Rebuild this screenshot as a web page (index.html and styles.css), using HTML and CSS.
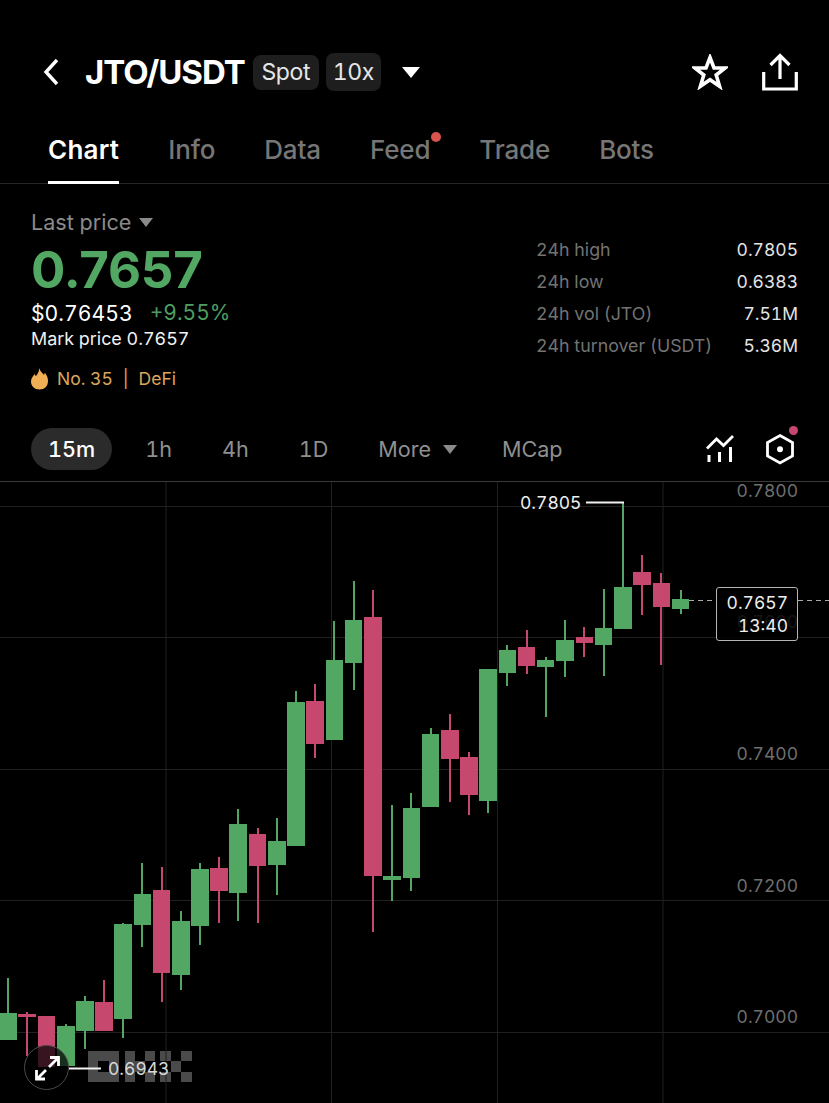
FILE: index.html
```html
<!DOCTYPE html>
<html lang="en">
<head>
<meta charset="utf-8">
<title>JTO/USDT</title>
<link rel="stylesheet" href="styles.css">
</head>
<body>
<main class="app">
  <header class="topbar">
    <svg class="back" width="16" height="28" viewBox="0 0 16 28"><path d="M14 2 3 14l11 12" fill="none" stroke="#fff" stroke-width="3.4"/></svg>
    <h1 class="pair">JTO/USDT</h1>
    <span class="chip chip-spot">Spot</span>
    <span class="chip chip-lev">10x</span>
    <span class="caret caret-white"></span>
    <span class="spacer"></span>
    <svg class="star" width="36" height="36" viewBox="0 0 36 36"><path d="M18 3.500 22 14h11.200l-9 7 3.400 11.300L18 25.700 8.400 32.300 11.800 21l-9-7H14z" fill="none" stroke="#fff" stroke-width="3.600" stroke-linejoin="miter"/></svg>
    <svg class="share" width="36" height="38" viewBox="0 0 36 38"><path d="M18 26V3M8.500 12 18 2.500 27.500 12M1.700 19v17h32.600V19" fill="none" stroke="#fff" stroke-width="3.200"/></svg>
  </header>

  <nav class="tabs">
    <a class="tab tab-active">Chart</a>
    <a class="tab">Info</a>
    <a class="tab">Data</a>
    <a class="tab tab-dot">Feed</a>
    <a class="tab">Trade</a>
    <a class="tab">Bots</a>
  </nav>

  <section class="summary">
    <div class="price-col">
      <div class="last-label">Last price <span class="caret caret-gray"></span></div>
      <div class="last-price">0.7657</div>
      <div class="fiat-row"><span class="fiat">$0.76453</span><span class="change">+9.55%</span></div>
      <div class="mark">Mark price 0.7657</div>
      <div class="rank">
        <svg width="17" height="22" viewBox="0 0 17 22"><path d="M8 0c1 3 3 4.500 5 7 .5-1 .6-1.500.7-2.500C15.800 7 17 9.500 17 13c0 5-3.500 8.500-8.500 8.500S0 18 0 13.500C0 10 2 8.500 3.500 6c.5 1 .8 1.500 1.500 2C6.500 6 8.500 3.500 8 0z" fill="#f0ae55"/></svg>
        <span>No. 35</span><span class="rank-sep">|</span><span>DeFi</span>
      </div>
    </div>
    <dl class="stats">
      <div class="stat"><dt>24h high</dt><dd>0.7805</dd></div>
      <div class="stat"><dt>24h low</dt><dd>0.6383</dd></div>
      <div class="stat"><dt>24h vol (JTO)</dt><dd>7.51M</dd></div>
      <div class="stat"><dt>24h turnover (USDT)</dt><dd>5.36M</dd></div>
    </dl>
  </section>

  <div class="timeframes">
    <span class="tf tf-active">15m</span>
    <span class="tf">1h</span>
    <span class="tf">4h</span>
    <span class="tf">1D</span>
    <span class="tf tf-more">More <span class="caret caret-gray caret-more"></span></span>
    <span class="tf">MCap</span>
    <span class="spacer"></span>
    <svg class="tool-chart" width="28" height="28" viewBox="0 0 28 28"><path d="M1 13.500 10.500 4l7 6.500L27 1" fill="none" stroke="#fff" stroke-width="2.800"/><path d="M3 20v7M13.500 17v10M24.500 12v15" fill="none" stroke="#fff" stroke-width="3"/></svg>
    <span class="tool-hex">
      <svg width="30" height="32" viewBox="0 0 30 32"><path d="M15 2.500 27.500 9.500v13.500L15 30 2.500 23V9.500z" fill="none" stroke="#fff" stroke-width="2.800"/><circle cx="15" cy="16.300" r="3" fill="#fff"/></svg>
    </span>
  </div>

  <section class="chart">
    <div class="watermark">
      <i class="wm wm-o"></i>
      <i class="wm wm-k1"></i><i class="wm wm-k2"></i><i class="wm wm-k3"></i><i class="wm wm-k4"></i>
      <i class="wm wm-x1"></i><i class="wm wm-x2"></i><i class="wm wm-x3"></i><i class="wm wm-x4"></i><i class="wm wm-x5"></i>
    </div>
    <svg class="plot" width="829" height="622" viewBox="0 481 829 622">
      <g class="grid">
        <path d="M0 506.500H829M0 637.500H829M0 769.500H829M0 900.500H829M0 1032.500H829M166 481V1103M331.500 481V1103M497.500 481V1103M663 481V1103"/>
      </g>
      <path class="dash" d="M689 600.500H716M798 600.500H829"/>
      <g class="up">
        <rect x="7" y="978" width="2" height="36"/><rect x="-1" y="1013" width="18" height="27"/>
        <rect x="65" y="1024" width="2" height="4"/><rect x="57" y="1026" width="18" height="40"/>
        <rect x="84" y="996" width="2" height="53"/><rect x="76" y="1001" width="18" height="30"/>
        <rect x="122" y="923" width="2" height="115"/><rect x="114" y="924" width="18" height="95"/>
        <rect x="141" y="863" width="2" height="84"/><rect x="134" y="894" width="17" height="31"/>
        <rect x="180" y="911" width="2" height="79"/><rect x="172" y="921" width="18" height="54"/>
        <rect x="199" y="863" width="2" height="82"/><rect x="191" y="869" width="18" height="57"/>
        <rect x="237" y="809" width="2" height="112"/><rect x="229" y="824" width="18" height="69"/>
        <rect x="276" y="818" width="2" height="77"/><rect x="268" y="841" width="18" height="24"/>
        <rect x="295" y="691" width="2" height="12"/><rect x="287" y="702" width="18" height="144"/>
        <rect x="333" y="621" width="2" height="40"/><rect x="326" y="660" width="17" height="80"/>
        <rect x="353" y="581" width="2" height="109"/><rect x="345" y="620" width="17" height="43"/>
        <rect x="391" y="805" width="2" height="96"/><rect x="383" y="876" width="18" height="4"/>
        <rect x="410" y="793" width="2" height="98"/><rect x="403" y="808" width="17" height="70"/>
        <rect x="430" y="728" width="2" height="8"/><rect x="422" y="734" width="17" height="73"/>
        <rect x="487" y="795" width="2" height="18"/><rect x="479" y="669" width="18" height="132"/>
        <rect x="506" y="645" width="2" height="41"/><rect x="499" y="650" width="17" height="23"/>
        <rect x="545" y="657" width="2" height="60"/><rect x="537" y="660" width="17" height="7"/>
        <rect x="564" y="620" width="2" height="57"/><rect x="556" y="640" width="18" height="21"/>
        <rect x="603" y="589" width="2" height="87"/><rect x="595" y="628" width="17" height="17"/>
        <rect x="622" y="503" width="2" height="86"/><rect x="614" y="587" width="18" height="42"/>
        <rect x="680" y="590" width="2" height="24"/><rect x="672" y="599" width="17" height="10"/>
      </g>
      <g class="dn">
        <rect x="26" y="1012" width="2" height="44"/><rect x="18" y="1014" width="18" height="3"/>
        <rect x="45" y="1016" width="2" height="51"/><rect x="38" y="1016" width="17" height="51"/>
        <rect x="103" y="980" width="2" height="22"/><rect x="95" y="1002" width="18" height="29"/>
        <rect x="161" y="867" width="2" height="135"/><rect x="153" y="890" width="17" height="83"/>
        <rect x="218" y="857" width="2" height="66"/><rect x="210" y="868" width="18" height="23"/>
        <rect x="257" y="828" width="2" height="95"/><rect x="249" y="834" width="17" height="32"/>
        <rect x="314" y="684" width="2" height="74"/><rect x="306" y="701" width="18" height="43"/>
        <rect x="372" y="590" width="2" height="342"/><rect x="364" y="617" width="18" height="259"/>
        <rect x="449" y="714" width="2" height="88"/><rect x="441" y="730" width="18" height="29"/>
        <rect x="468" y="752" width="2" height="63"/><rect x="460" y="757" width="18" height="38"/>
        <rect x="526" y="630" width="2" height="44"/><rect x="518" y="647" width="17" height="19"/>
        <rect x="583" y="627" width="2" height="30"/><rect x="576" y="637" width="17" height="6"/>
        <rect x="641" y="555" width="2" height="60"/><rect x="633" y="572" width="18" height="13"/>
        <rect x="660" y="573" width="2" height="92"/><rect x="653" y="583" width="17" height="24"/>
      </g>
      <path class="marker" d="M586 502.500H624M69 1068.500H101"/>
    </svg>

    <span class="axis axis-800">0.7800</span>
    <span class="axis axis-760">0.7600</span>
    <span class="axis axis-740">0.7400</span>
    <span class="axis axis-720">0.7200</span>
    <span class="axis axis-700">0.7000</span>

    <span class="extreme extreme-high">0.7805</span>
    <span class="extreme extreme-low">0.6943</span>

    <div class="price-tag"><span>0.7657</span><span>13:40</span></div>

    <button class="expand" aria-label="Expand">
      <svg width="26" height="26" viewBox="0 0 26 26"><path d="M15 12 24 3M3 24l9-9M16 2.500h8.500V11M2.500 15v9H11" fill="none" stroke="#fff" stroke-width="2.800"/></svg>
    </button>
  </section>
</main>
</body>
</html>
```
FILE: styles.css
```css
* { box-sizing: border-box; }
html, body { margin: 0; padding: 0; background: #000; }
body { width: 829px; height: 1103px; overflow: hidden; font-family: Inter, "Liberation Sans", sans-serif; font-variant-numeric: tabular-nums; color: #fff; }
.app { display: flex; flex-direction: column; height: 1103px; }
.spacer { flex: 1; }

.caret { display: inline-block; width: 0; height: 0; border-style: solid; border-color: transparent; border-bottom-width: 0; }
.caret-white { border-width: 11px 9px 0; border-top-color: #fff; }
.caret-gray { border-width: 9px 7px 0; border-top-color: #8a8a8a; }

.topbar { height: 122px; display: flex; align-items: center; padding: 22px 31px 0 43px; }
.pair { margin: 0 8px 0 26px; font-size: 33px; font-weight: 700; letter-spacing: -1px; line-height: 40px; }
.chip { height: 35px; display: flex; align-items: center; justify-content: center; background: #1e1e1e; border-radius: 8px; font-size: 23px; color: #e6e6e6; letter-spacing: -.4px; }
.chip-spot { width: 66px; }
.chip-lev { width: 55px; height: 38px; margin-left: 7px; }
.caret-white { margin-left: 21px; }
.star { margin-right: 34px; }

.tabs { height: 62px; display: flex; gap: 49px; padding-left: 48px; border-bottom: 1px solid #262626; }
.tab { position: relative; height: 61px; padding-top: 11px; font-size: 26px; font-weight: 500; line-height: 34px; color: #767676; letter-spacing: -.15px; }
.tab-active { color: #fff; font-weight: 600; letter-spacing: .25px; border-bottom: 3px solid #fff; height: 62px; }
.tab-dot::after { content: ""; position: absolute; top: 10px; right: -11px; width: 10px; height: 10px; border-radius: 50%; background: #d9534f; }

.summary { height: 239px; display: flex; justify-content: space-between; padding: 0 31px; }
.last-label { margin-top: 23px; font-size: 21.600px; line-height: 30px; color: #8a8a8a; }
.last-label .caret { margin: 0 0 3px 2px; }
.last-price { margin-top: 4px; font-size: 51px; line-height: 58px; font-weight: 700; font-variant-numeric: normal; color: #52a863; letter-spacing: -.2px; }
.fiat-row { display: flex; gap: 17px; font-size: 21.200px; line-height: 28px; }
.change { color: #4f9d60; font-size: 21px; }
.mark { font-size: 17.900px; line-height: 23px; color: #f2f2f2; }
.rank { display: flex; align-items: center; margin-top: 16px; font-size: 17.500px; line-height: 26px; color: #dca65c; }
.rank svg { margin-right: 9px; }
.rank-sep { margin: 0 10px; }

.stats { margin: 49px 0 0; width: 262px; }
.stat { display: flex; justify-content: space-between; height: 32px; align-items: center; }
.stat dt { font-size: 17.800px; color: #737373; }
.stat dd { margin: 0; font-size: 17.500px; color: #e4e4e4; }

.timeframes { height: 58px; display: flex; align-items: center; gap: 16px; padding: 5px 34px 11px 31px; font-size: 21.600px; color: #8f8f8f; }
.tf { padding: 0 17px; line-height: 42px; height: 42px; white-space: nowrap; }
.tf-active { background: #2b2b2b; border-radius: 21px; color: #fff; font-weight: 500; }
.tf-more { margin-right: -5px; }
.caret-more { margin: 0 0 3px 6px; }
.tool-chart { margin-right: 15px; }
.tool-hex { position: relative; display: block; height: 32px; width: 30px; }
.tool-hex::after { content: ""; position: absolute; top: -7px; right: -3px; width: 9px; height: 9px; border-radius: 50%; background: #c7486f; }

.chart { position: relative; flex: 1; border-top: 1px solid #3a3a3a; overflow: hidden; }
.plot { display: block; position: absolute; left: 0; top: -1px; }
.grid path { stroke: #202020; stroke-width: 1; fill: none; }
.dash { stroke: #aaa; stroke-width: 1; stroke-dasharray: 5 4; fill: none; }
.marker { stroke: #f2f2f2; stroke-width: 2; fill: none; }
.up { fill: #52a863; }
.dn { fill: #c7486f; }

.axis { position: absolute; right: 31px; font-size: 17.500px; line-height: 22px; color: #6f6f6f; }
.axis-800 { top: -2px; }
.axis-760 { top: 129px; }
.axis-740 { top: 261px; }
.axis-720 { top: 393px; }
.axis-700 { top: 524px; }

.extreme { position: absolute; font-size: 17.500px; line-height: 22px; color: #f0f0f0; }
.extreme-high { left: 520px; top: 10px; }
.extreme-low { left: 108px; top: 576px; color: #d8d8d8; }

.watermark { position: absolute; left: 88px; top: 569px; width: 104px; height: 31px; }
.wm { position: absolute; background: #4a4a4a; }
.wm-o { left: 0; top: 0; width: 31px; height: 31px; background: transparent; border: 10px solid #4a4a4a; }
.wm-k1 { left: 37px; top: 0; width: 10px; height: 31px; }
.wm-k2 { left: 47px; top: 10px; width: 10px; height: 11px; }
.wm-k3 { left: 57px; top: 0; width: 10px; height: 10px; }
.wm-k4 { left: 57px; top: 21px; width: 10px; height: 10px; }
.wm-x1 { left: 72px; top: 0; width: 11px; height: 10px; }
.wm-x2 { left: 72px; top: 21px; width: 11px; height: 10px; }
.wm-x3 { left: 83px; top: 10px; width: 10px; height: 11px; }
.wm-x4 { left: 93px; top: 0; width: 11px; height: 10px; }
.wm-x5 { left: 93px; top: 21px; width: 11px; height: 10px; }

.price-tag { position: absolute; left: 716px; top: 105px; width: 82px; height: 54px; display: flex; flex-direction: column; align-items: flex-end; justify-content: center; padding-right: 9px; border: 1px solid #b5b5b5; border-radius: 3px; background: rgba(0,0,0,.82); font-size: 17.500px; line-height: 23px; color: #eee; }

.expand { position: absolute; left: 24px; top: 563px; width: 45px; height: 45px; padding: 0; display: flex; align-items: center; justify-content: center; background: rgba(0,0,0,.72); border: 1.500px solid #4a4a4a; border-radius: 50%; }
```
